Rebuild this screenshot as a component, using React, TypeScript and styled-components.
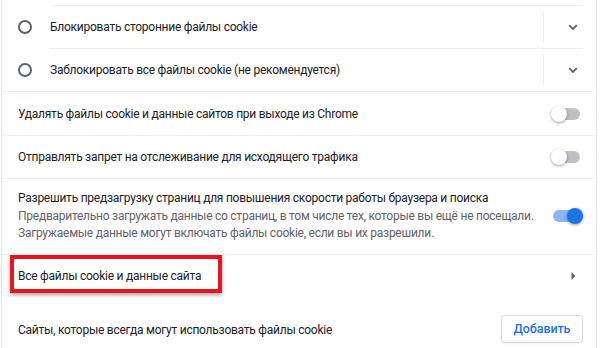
import React from "react";
import styled, { createGlobalStyle } from "styled-components";

const Global = createGlobalStyle`
  html, body { margin: 0; padding: 0; background: #fff; overflow: hidden; }
  body { font-family: Roboto, "Noto Sans", "Liberation Sans", sans-serif; font-size: 12px; letter-spacing: -0.25px; color: #202124; }
  #root { width: 600px; height: 348px; overflow: hidden; }
`;

const Card = styled.div`
  margin: 0 3px 0 1px;
  border-left: 1px solid #e6e6e6;
  border-right: 1px solid #e6e6e6;
  min-height: 348px;
  box-sizing: border-box;
  display: flex;
  flex-direction: column;
`;

const TopTail = styled.div`
  height: 5px;
`;

const RadioRow = styled.div`
  display: flex;
  align-items: stretch;
  height: 43px;
`;

const RadioCell = styled.div`
  width: 48px;
  padding-right: 2px;
  box-sizing: border-box;
  display: flex;
  align-items: center;
  justify-content: center;
`;

const RadioCircle = styled.span`
  width: 14px;
  height: 14px;
  box-sizing: border-box;
  border: 2px solid #5f6368;
  border-radius: 50%;
`;

const RadioContent = styled.div`
  flex: 1;
  margin-right: 13px;
  border-top: 1px solid #eeeff1;
  display: flex;
  align-items: center;
`;

const Label = styled.span`
  flex: 1;
  line-height: 18px;
`;

const Divider = styled.span`
  width: 1px;
  height: 30px;
  background: #ebebeb;
`;

const ExpandCell = styled.div`
  width: 39px;
  display: flex;
  justify-content: flex-end;
  align-items: center;
  padding-right: 5px;
  box-sizing: border-box;
`;

const Row = styled.div<{ $h?: number }>`
  position: relative;
  display: flex;
  align-items: center;
  min-height: ${(p) => p.$h ?? 42}px;
  padding: 0 13px 0 16px;
  border-top: 1px solid #eeeff1;
`;

const TextBlock = styled.div`
  flex: 1;
  line-height: 17.5px;
  padding: 11px 0;
`;

const Secondary = styled.div`
  color: #5f6368;
`;

const ToggleWrap = styled.span`
  position: relative;
  width: 32px;
  height: 16px;
  flex: none;
`;

const Track = styled.span<{ $on: boolean }>`
  position: absolute;
  left: 2px;
  right: 3px;
  top: 2px;
  height: 12px;
  border-radius: 6px;
  background: ${(p) => (p.$on ? "#8ab4f8" : "#bdc1c6")};
`;

const Knob = styled.span<{ $on: boolean }>`
  position: absolute;
  top: 0;
  ${(p) => (p.$on ? "right: 0;" : "left: 0;")}
  width: 16px;
  height: 16px;
  border-radius: 50%;
  background: ${(p) => (p.$on ? "#1a73e8" : "#fff")};
  box-shadow: 0 1px 3px rgba(0, 0, 0, 0.4);
`;

const HighlightBox = styled.span`
  position: absolute;
  left: 8px;
  top: 0;
  width: 212px;
  height: 38px;
  box-sizing: border-box;
  border: 4px solid #e8151b;
  box-shadow: 0 2px 4px rgba(0, 0, 0, 0.35);
  pointer-events: none;
`;

const ArrowCell = styled.span`
  width: 20px;
  display: flex;
  justify-content: center;
`;

const SectionRow = styled.div`
  display: flex;
  align-items: center;
  padding: 18px 13px 8px 16px;
`;

const SectionLabel = styled.span`
  flex: 1;
  padding-top: 3px;
`;

const Button = styled.button`
  height: 28px;
  width: 82px;
  border: 1px solid #dadce0;
  border-radius: 4px;
  background: #fff;
  color: #1a73e8;
  font-family: Roboto, "Noto Sans", sans-serif;
  font-size: 12.5px;
  letter-spacing: -0.1px;
  font-weight: 500;
  padding: 0;
  box-shadow: 0 1px 2px rgba(0, 0, 0, 0.06);
`;

const Toggle = ({ on }: { on: boolean }) => (
  <ToggleWrap>
    <Track $on={on} />
    <Knob $on={on} />
  </ToggleWrap>
);

const Chevron = () => (
  <svg width="10" height="7" viewBox="0 0 10 7">
    <path d="M1.2 1.2 L5 5 L8.8 1.2" fill="none" stroke="#5f6368" strokeWidth="1.8" />
  </svg>
);

const ArrowRight = () => (
  <svg width="5" height="8" viewBox="0 0 5 8">
    <path d="M0.5 0 L4.5 4 L0.5 8 Z" fill="#5f6368" />
  </svg>
);

export default function App() {
  return (
    <>
      <Global />
      <Card>
        <TopTail />
        <RadioRow>
          <RadioCell>
            <RadioCircle />
          </RadioCell>
          <RadioContent>
            <Label>Блокировать сторонние файлы cookie</Label>
            <Divider />
            <ExpandCell>
              <Chevron />
            </ExpandCell>
          </RadioContent>
        </RadioRow>
        <RadioRow>
          <RadioCell>
            <RadioCircle />
          </RadioCell>
          <RadioContent>
            <Label>Заблокировать все файлы cookie (не рекомендуется)</Label>
            <Divider />
            <ExpandCell>
              <Chevron />
            </ExpandCell>
          </RadioContent>
        </RadioRow>
        <Row $h={43}>
          <Label>Удалять файлы cookie и данные сайтов при выходе из Chrome</Label>
          <Toggle on={false} />
        </Row>
        <Row>
          <Label>Отправлять запрет на отслеживание для исходящего трафика</Label>
          <Toggle on={false} />
        </Row>
        <Row>
          <TextBlock>
            <div>Разрешить предзагрузку страниц для повышения скорости работы браузера и поиска</div>
            <Secondary>Предварительно загружать данные со страниц, в том числе тех, которые вы ещё не посещали.</Secondary>
            <Secondary>Загружаемые данные могут включать файлы cookie, если вы их разрешили.</Secondary>
          </TextBlock>
          <Toggle on={true} />
        </Row>
        <Row>
          <HighlightBox />
          <Label>Все файлы cookie и данные сайта</Label>
          <ArrowCell>
            <ArrowRight />
          </ArrowCell>
        </Row>
        <SectionRow>
          <SectionLabel>Сайты, которые всегда могут использовать файлы cookie</SectionLabel>
          <Button>Добавить</Button>
        </SectionRow>
      </Card>
    </>
  );
}
